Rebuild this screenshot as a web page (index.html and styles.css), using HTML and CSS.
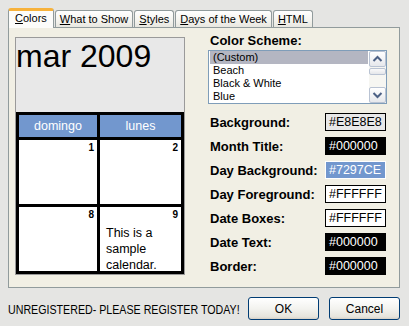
FILE: index.html
```
<!DOCTYPE html>
<html>
<head>
<meta charset="utf-8">
<link rel="stylesheet" href="styles.css">
</head>
<body>
<div class="dialog">
  <div class="tabs">
    <div class="tab active"><u>C</u>olors</div>
    <div class="tab"><u>W</u>hat to Show</div>
    <div class="tab"><u>S</u>tyles</div>
    <div class="tab"><u>D</u>ays of the Week</div>
    <div class="tab"><u>H</u>TML</div>
  </div>
  <div class="panel">
    <div class="preview">
      <div class="month">mar 2009</div>
      <div class="cal">
        <div class="dayname">domingo</div>
        <div class="dayname">lunes</div>
        <div class="cell"><span class="num">1</span></div>
        <div class="cell"><span class="num">2</span></div>
        <div class="cell"><span class="num">8</span></div>
        <div class="cell"><span class="num">9</span><div class="note">This is a sample calendar.</div></div>
      </div>
    </div>
    <div class="settings">
      <div class="heading">Color Scheme:</div>
      <div class="listbox">
        <ul class="items">
          <li class="sel">(Custom)</li>
          <li>Beach</li>
          <li>Black &amp; White</li>
          <li>Blue</li>
        </ul>
        <div class="scrollbar">
          <div class="sbtn"><svg width="15" height="14" viewBox="0 0 15 14"><polyline points="3.5,9 7.5,5 11.5,9" fill="none" stroke="#4D6185" stroke-width="2"/></svg></div>
          <div class="thumb"></div>
          <div class="track"></div>
          <div class="sbtn"><svg width="15" height="14" viewBox="0 0 15 14"><polyline points="3.5,5 7.5,9 11.5,5" fill="none" stroke="#4D6185" stroke-width="2"/></svg></div>
        </div>
      </div>
      <div class="rows">
        <div class="row"><span class="label">Background:</span><span class="swatch sw-light">#E8E8E8</span></div>
        <div class="row"><span class="label">Month Title:</span><span class="swatch sw-black">#000000</span></div>
        <div class="row"><span class="label">Day Background:</span><span class="swatch sw-blue">#7297CE</span></div>
        <div class="row"><span class="label">Day Foreground:</span><span class="swatch sw-white">#FFFFFF</span></div>
        <div class="row"><span class="label">Date Boxes:</span><span class="swatch sw-white">#FFFFFF</span></div>
        <div class="row"><span class="label">Date Text:</span><span class="swatch sw-black">#000000</span></div>
        <div class="row"><span class="label">Border:</span><span class="swatch sw-black">#000000</span></div>
      </div>
    </div>
  </div>
  <div class="footer">
    <div class="notice"><span class="notice-text">UNREGISTERED- PLEASE REGISTER TODAY!</span></div>
    <button class="btn">OK</button>
    <button class="btn">Cancel</button>
  </div>
</div>
</body>
</html>
```
FILE: styles.css
```
html, body {
  margin: 0;
  padding: 0;
}
body {
  width: 409px;
  height: 326px;
  overflow: hidden;
  background: #E5E5E3;
  font-family: "Liberation Sans", Arial, sans-serif;
  color: #000;
}
.dialog {
  padding: 8px 0 0 8px;
}
.tabs {
  display: flex;
  align-items: flex-end;
  height: 19px;
  position: relative;
  z-index: 1;
}
.tab {
  box-sizing: border-box;
  height: 17px;
  border: 1px solid #919B9C;
  border-bottom: none;
  border-radius: 3px 3px 0 0;
  background: linear-gradient(#FFFFFF, #F4F3EE 60%, #E8E7E0);
  font-size: 11px;
  line-height: 15px;
  padding: 1px 4px 0;
  margin-left: 1px;
  white-space: nowrap;
}
.tab.active {
  height: 20px;
  margin-left: 0;
  margin-bottom: -1px;
  border-top: 3px solid #F7B23B;
  background: #FCFCFA;
  line-height: 14px;
  padding: 0 6px;
}
.panel {
  box-sizing: border-box;
  width: 392px;
  height: 261px;
  border: 1px solid #919B9C;
  background: #F1EFE4;
  display: flex;
  padding-left: 6px;
}
.preview {
  box-sizing: border-box;
  width: 170px;
  height: 238px;
  margin-top: 9px;
  border: 1px solid #9A9A9A;
  background: #E8E8E8;
  display: flex;
  flex-direction: column;
}
.month {
  height: 74px;
  font-size: 32px;
  line-height: 36px;
  white-space: nowrap;
}
.cal {
  background: #000;
  display: grid;
  grid-template-columns: 78px 81px;
  grid-template-rows: 22px 64px 64px;
  gap: 3px;
  padding: 3px;
}
.dayname {
  background: #7297CE;
  color: #fff;
  font-size: 12.5px;
  line-height: 22px;
  text-align: center;
}
.cell {
  background: #fff;
  padding: 2px 3px 0 6px;
}
.num {
  display: block;
  text-align: right;
  font-weight: bold;
  font-size: 10px;
  line-height: 11px;
}
.note {
  font-size: 12.5px;
  line-height: 16px;
  margin-top: 5px;
}
.settings {
  width: 179px;
  margin-left: 23px;
  padding-top: 5px;
}
.heading {
  font-size: 13px;
  font-weight: bold;
  line-height: 16px;
  padding-left: 2px;
  margin-bottom: 1px;
}
.listbox {
  box-sizing: border-box;
  width: 179px;
  height: 54px;
  border: 1px solid #7F9DB9;
  background: #fff;
  display: flex;
  overflow: hidden;
}
.items {
  flex: 1;
  list-style: none;
  margin: 0;
  padding: 0 1px;
  font-size: 11px;
}
.items li {
  height: 13px;
  line-height: 13px;
  padding-left: 3px;
}
.items li.sel {
  background: #B4B6C2;
}
.scrollbar {
  width: 17px;
  display: flex;
  flex-direction: column;
  background: #F6F6F2;
}
.sbtn {
  box-sizing: border-box;
  height: 16px;
  border: 1px solid #B9C3D3;
  border-radius: 2px;
  background: linear-gradient(#FFFFFF, #E6E8EC);
  display: flex;
  align-items: center;
  justify-content: center;
}
.thumb {
  box-sizing: border-box;
  height: 7px;
  margin-top: 1px;
  border: 1px solid #B9C3D3;
  border-radius: 2px;
  background: linear-gradient(#FAFAFA, #E4E6EA);
}
.track {
  flex: 1;
}
.rows {
  margin-top: 6px;
}
.row {
  height: 24px;
  display: flex;
  align-items: center;
  justify-content: space-between;
  padding-left: 2px;
}
.label {
  font-size: 13px;
  font-weight: bold;
  white-space: nowrap;
}
.swatch {
  box-sizing: border-box;
  width: 61px;
  height: 18px;
  margin-right: 1px;
  border: 1px solid #000;
  font-size: 12.5px;
  line-height: 16px;
  padding-left: 3px;
  white-space: nowrap;
  overflow: hidden;
}
.sw-light { background: #E8E8E8; color: #000; }
.sw-black { background: #000; color: #fff; }
.sw-blue { background: #7297CE; color: #fff; border-color: #fff; }
.sw-white { background: #fff; color: #000; }
.footer {
  width: 392px;
  margin-top: 9px;
  display: flex;
  align-items: center;
}
.notice {
  flex: 1 1 0;
  min-width: 0;
  white-space: nowrap;
}
.notice-text {
  display: inline-block;
  font-size: 13px;
  transform: scaleX(0.82);
  transform-origin: left center;
}
.btn {
  flex: 0 0 71px;
  box-sizing: border-box;
  width: 71px;
  height: 23px;
  margin-left: 10px;
  border: 1px solid #003C74;
  border-radius: 3px;
  background: linear-gradient(#FFFFFF, #F3F3EF 50%, #E6E4DC 90%, #D6D0C5);
  font-family: "Liberation Sans", Arial, sans-serif;
  font-size: 12px;
  color: #000;
  padding: 0;
}
```
